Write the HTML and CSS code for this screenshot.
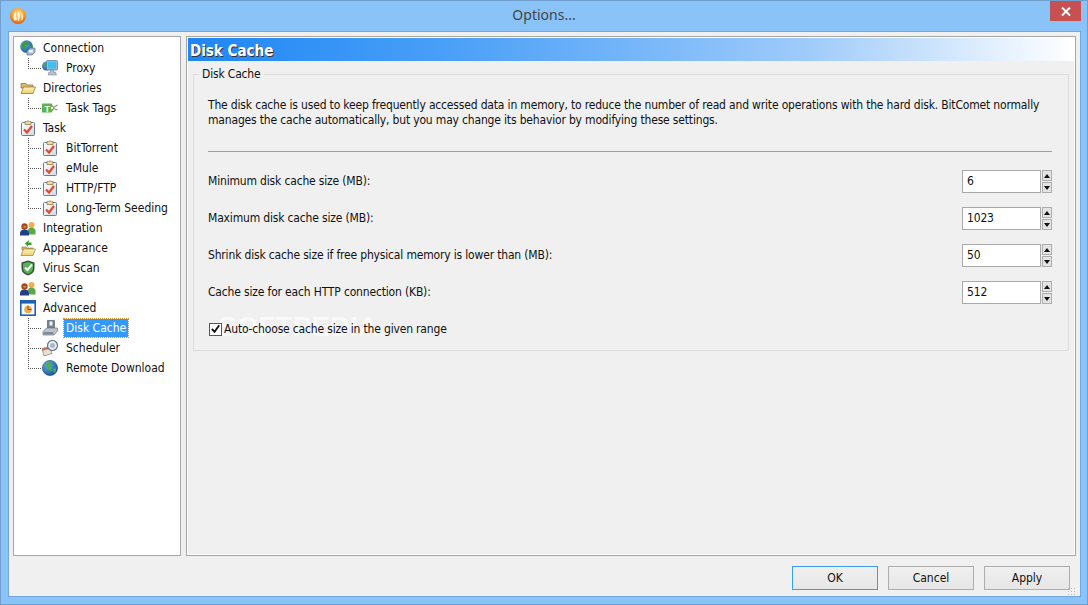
FILE: index.html
```html
<!DOCTYPE html>
<html lang="en">
<head>
<meta charset="utf-8">
<title>Options...</title>
<link rel="stylesheet" href="styles.css">
</head>
<body>
<svg class="defs" width="0" height="0" aria-hidden="true">
  <defs>
    <radialGradient id="gOrange" cx=".5" cy=".35" r=".7"><stop offset="0" stop-color="#ffe08a"/><stop offset=".6" stop-color="#f79a2a"/><stop offset="1" stop-color="#dd4a0c"/></radialGradient>
    <linearGradient id="gPaper" x1="0" y1="0" x2="1" y2="1"><stop offset="0" stop-color="#ffffff"/><stop offset="1" stop-color="#cfd8e6"/></linearGradient>
    <linearGradient id="gFolder" x1="0" y1="0" x2="0" y2="1"><stop offset="0" stop-color="#fff4bd"/><stop offset="1" stop-color="#eecb6c"/></linearGradient>
    <radialGradient id="gGlobe" cx=".35" cy=".3" r=".8"><stop offset="0" stop-color="#5fb2ee"/><stop offset="1" stop-color="#134f96"/></radialGradient>
    <symbol id="i-conn" viewBox="0 0 16 16">
      <circle cx="6.500" cy="6.500" r="6.300" fill="url(#gGlobe)"/>
      <path d="M2 4l3-3 4 .5-1 3-3 1 1 3-2 .5-2-2.500zM9 6l3-1 1 2-2 2-2-1z" fill="#3f9a3e"/>
      <path d="M7 11l3-3h5v4l-3 3H7z" fill="#a8b8cc" stroke="#55677f" stroke-width=".6"/>
      <rect x="9" y="10" width="4" height="2.500" fill="#e8f1fa"/>
    </symbol>
    <symbol id="i-proxy" viewBox="0 0 16 16">
      <circle cx="4.500" cy="6" r="4.500" fill="url(#gGlobe)"/>
      <path d="M1.500 4l3-2 2 2-2 3-2-1z" fill="#49a847"/>
      <rect x="4.500" y="0.500" width="11" height="9.500" rx="1" fill="#9dbcd9" stroke="#4f6e8e" stroke-width=".7"/>
      <rect x="6" y="2" width="8" height="6.500" fill="#3fc0f2"/>
      <path d="M8.500 10h3v2h2l1 3H6l1-3h1.500z" fill="#b9c3d0" stroke="#6b7a8c" stroke-width=".5"/>
    </symbol>
    <symbol id="i-folder" viewBox="0 0 16 16">
      <path d="M1 3.500h5l1 1.500h6v3H1z" fill="#d9bb67" stroke="#84703a" stroke-width=".7"/>
      <path d="M1 13.500l2.500-6.500h12l-2.500 6.500z" fill="url(#gFolder)" stroke="#84703a" stroke-width=".7"/>
    </symbol>
    <symbol id="i-tag" viewBox="0 0 16 16">
      <path d="M0 3.500h9.500l3 4.500-3 4.500H0z" fill="#5cb348"/>
      <text class="tagt" x="2.500" y="11.500">T</text>
      <circle cx="10" cy="8" r="1.200" fill="#fff"/>
      <path d="M11.500 7.500l4-2.500M11.500 8.500l4 1.500" stroke="#8b9388" stroke-width="1.200" fill="none"/>
    </symbol>
    <symbol id="i-task" viewBox="0 0 16 16">
      <rect x="1.500" y="2.500" width="13" height="13" rx="1" fill="url(#gPaper)" stroke="#6a7d98" stroke-width="1"/>
      <path d="M5 1.500h1.500q1.500-1.500 3 0H11v3H5z" fill="#eed9a0" stroke="#8b7437" stroke-width=".7"/>
      <path d="M4 9.500l3 3 5-6.500" stroke="#e2492c" stroke-width="2.200" fill="none"/>
    </symbol>
    <symbol id="i-people" viewBox="0 0 16 16">
      <circle cx="11.500" cy="5" r="3" fill="#eeb04e"/>
      <path d="M7.500 14.500v-4q1-3 4-3t4 3v4z" fill="#5aa846"/>
      <circle cx="4.500" cy="6.500" r="3.200" fill="#a34c1f"/>
      <path d="M3 6.500a2 1.800 0 0 0 3.500 0z" fill="#f0c38e"/>
      <path d="M0 15.500v-3q1-3 4.500-3t4.500 3v3z" fill="#223f86"/>
    </symbol>
    <symbol id="i-appear" viewBox="0 0 16 16">
      <path d="M2 7h4l1 1h6v2H2z" fill="#d9bb67" stroke="#84703a" stroke-width=".6"/>
      <path d="M1 15.500l2.500-6.500h12l-2.500 6.500z" fill="url(#gFolder)" stroke="#84703a" stroke-width=".6"/>
      <path d="M9 0L5 3.500 8 7V5h3.500V2.500H8.500z" fill="#3a9e2c"/>
    </symbol>
    <symbol id="i-shield" viewBox="0 0 16 16">
      <path d="M8 .5l6.500 2v5.500q0 5.500-6.500 7.500-6.500-2-6.500-7.500V2.500z" fill="#3d4a44"/>
      <path d="M8 2l5 1.500v4.500q0 4.500-5 6-5-1.500-5-6V3.500z" fill="#54b552"/>
      <path d="M5 7.500l2.500 2.500L12 4.500" stroke="#fff" stroke-width="2" fill="none"/>
    </symbol>
    <symbol id="i-adv" viewBox="0 0 16 16">
      <rect x=".8" y=".8" width="14.400" height="14.400" fill="#f8fbff" stroke="#1e62b4" stroke-width="1.600"/>
      <rect x=".8" y=".8" width="14.400" height="2.800" fill="#1e62b4"/>
      <circle cx="8" cy="9.500" r="3.800" fill="#e8b04a"/>
      <path d="M8 5.500v4h3.500" stroke="#7a4f12" stroke-width="1" fill="none"/>
    </symbol>
    <symbol id="i-disk" viewBox="0 0 16 16">
      <path d="M5.500 .5h7v8h-7z" fill="#78828f" stroke="#474f5c" stroke-width=".6"/>
      <rect x="7.500" y="1.500" width="3" height="4" fill="#eef1f5"/>
      <path d="M1 11.500l3.500-3.500h11v3l-3.500 4H1z" fill="#bcc3cd" stroke="#5d6470" stroke-width=".6"/>
      <path d="M1.500 12h10v2.500h-10z" fill="#838a95"/>
    </symbol>
    <symbol id="i-sched" viewBox="0 0 16 16">
      <path d="M0 8.500l8-2 2 7-8 2.500z" fill="#e8dfd5" stroke="#8a7a72" stroke-width=".7"/>
      <path d="M0 8.500l8-2 .6 2.200-8 2z" fill="#c9735a"/>
      <circle cx="10.500" cy="5.500" r="5" fill="#e9edf2" stroke="#66778a" stroke-width="1.200"/>
      <circle cx="10.500" cy="5.500" r="2.500" fill="#a9b7c6"/>
    </symbol>
    <symbol id="i-globe" viewBox="0 0 16 16">
      <circle cx="8" cy="8" r="7.600" fill="url(#gGlobe)" stroke="#144a80" stroke-width=".6"/>
      <path d="M3 4l4-2 3 1-2 3 2 2-1 3-3-2-1-3-2-1zM11 9l3-1 0 3-2 2z" fill="#4fae45"/>
    </symbol>
  </defs>
</svg>

<div class="window">
  <header class="titlebar">
    <svg class="app-icon" viewBox="0 0 16 16" width="16" height="16" aria-hidden="true">
      <circle cx="8" cy="8" r="8" fill="url(#gOrange)"/>
      <path d="M4 12.500Q2.500 7 6 2.500 5.500 8 7 12M8 13Q7 6 9 2.500q1.500 5 0 10.500M11 12.500q1.500-4-1-9 4 3.500 2.800 8" fill="#fff" opacity=".85"/>
    </svg>
    <span class="title">Options...</span>
    <button class="close" type="button" aria-label="Close">
      <svg viewBox="0 0 10 9" width="10" height="9" aria-hidden="true"><path d="M1 .5l8 8M9 .5l-8 8" stroke="#fff" stroke-width="2" fill="none"/></svg>
    </button>
  </header>

  <div class="client">
    <div class="main">
      <nav class="tree">
        <div class="node"><svg class="ic"><use href="#i-conn"/></svg><span class="lbl">Connection</span></div>
        <div class="node child"><i class="elbow last"></i><svg class="ic"><use href="#i-proxy"/></svg><span class="lbl">Proxy</span></div>
        <div class="node"><svg class="ic"><use href="#i-folder"/></svg><span class="lbl">Directories</span></div>
        <div class="node child"><i class="elbow last"></i><svg class="ic"><use href="#i-tag"/></svg><span class="lbl">Task Tags</span></div>
        <div class="node"><svg class="ic"><use href="#i-task"/></svg><span class="lbl">Task</span></div>
        <div class="node child"><i class="elbow"></i><svg class="ic"><use href="#i-task"/></svg><span class="lbl">BitTorrent</span></div>
        <div class="node child"><i class="elbow"></i><svg class="ic"><use href="#i-task"/></svg><span class="lbl">eMule</span></div>
        <div class="node child"><i class="elbow"></i><svg class="ic"><use href="#i-task"/></svg><span class="lbl">HTTP/FTP</span></div>
        <div class="node child"><i class="elbow last"></i><svg class="ic"><use href="#i-task"/></svg><span class="lbl">Long-Term Seeding</span></div>
        <div class="node"><svg class="ic"><use href="#i-people"/></svg><span class="lbl">Integration</span></div>
        <div class="node"><svg class="ic"><use href="#i-appear"/></svg><span class="lbl">Appearance</span></div>
        <div class="node"><svg class="ic"><use href="#i-shield"/></svg><span class="lbl">Virus Scan</span></div>
        <div class="node"><svg class="ic"><use href="#i-people"/></svg><span class="lbl">Service</span></div>
        <div class="node"><svg class="ic"><use href="#i-adv"/></svg><span class="lbl">Advanced</span></div>
        <div class="node child"><i class="elbow"></i><svg class="ic"><use href="#i-disk"/></svg><span class="lbl selected">Disk Cache</span></div>
        <div class="node child"><i class="elbow"></i><svg class="ic"><use href="#i-sched"/></svg><span class="lbl">Scheduler</span></div>
        <div class="node child"><i class="elbow last"></i><svg class="ic"><use href="#i-globe"/></svg><span class="lbl">Remote Download</span></div>
      </nav>

      <section class="panel">
        <h1 class="panel-head">Disk Cache</h1>
        <fieldset class="group">
          <legend class="legend">Disk Cache</legend>
          <p class="desc">The disk cache is used to keep frequently accessed data in memory, to reduce the number of read and write operations with the hard disk. BitComet normally manages the cache automatically, but you may change its behavior by modifying these settings.</p>
          <hr class="rule">
          <div class="field"><span class="cap">Minimum disk cache size (MB):</span><div class="spin"><span class="input">6</span><span class="arrows"><b class="up"></b><b class="down"></b></span></div></div>
          <div class="field"><span class="cap">Maximum disk cache size (MB):</span><div class="spin"><span class="input">1023</span><span class="arrows"><b class="up"></b><b class="down"></b></span></div></div>
          <div class="field"><span class="cap">Shrink disk cache size if free physical memory is lower than (MB):</span><div class="spin"><span class="input">50</span><span class="arrows"><b class="up"></b><b class="down"></b></span></div></div>
          <div class="field"><span class="cap">Cache size for each HTTP connection (KB):</span><div class="spin"><span class="input">512</span><span class="arrows"><b class="up"></b><b class="down"></b></span></div></div>
          <div class="check">
            <span class="box"><svg viewBox="0 0 12 12" width="12" height="12" aria-hidden="true"><path d="M2 6l3 3 5-7" stroke="#111" stroke-width="2" fill="none"/></svg></span>
            <span>Auto-choose cache size in the given range</span>
            <span class="mark">SOFTPEDIA</span>
          </div>
        </fieldset>
      </section>
    </div>

    <footer class="actions">
      <button class="btn default" type="button">OK</button>
      <button class="btn" type="button">Cancel</button>
      <button class="btn" type="button">Apply</button>
      <i class="grip"></i>
    </footer>
  </div>
</div>
</body>
</html>
```

FILE: styles.css
```css
* { box-sizing: border-box; }
html, body { margin: 0; height: 100%; }
body {
  overflow: hidden;
  font-family: "DejaVu Sans Condensed", "DejaVu Sans", sans-serif;
  font-stretch: condensed;
  font-size: 12px;
  color: #111;
}
.defs { display: block; height: 0; }
.tagt { font: bold 9px "Liberation Sans", sans-serif; fill: #fff; }

.window {
  width: 1088px;
  height: 605px;
  display: flex;
  flex-direction: column;
  background: #8ac3f8;
  border: 1px solid #6f9fcf;
}
.titlebar {
  height: 30px;
  flex: none;
  display: flex;
  align-items: flex-start;
  position: relative;
  padding-left: 9px;
}
.app-icon { margin-top: 7px; }
.title {
  position: absolute;
  left: 0;
  right: 0;
  top: 4px;
  text-align: center;
  font-family: "Noto Sans", sans-serif;
  font-stretch: normal;
  font-size: 14px;
  line-height: 20px;
  color: #444;
}
.close {
  margin-left: auto;
  margin-right: 6px;
  width: 31px;
  height: 20px;
  padding: 0;
  border: 0;
  background: #c75050;
  display: flex;
  align-items: center;
  justify-content: center;
  position: relative;
}

.client {
  flex: 1;
  margin: 0 6px 7px 7px;
  background: #f0f0f0;
  border: 1px solid #74a8dc;
  display: flex;
  flex-direction: column;
  padding: 4px 4px 0 4px;
  position: relative;
}
.main {
  height: 520px;
  display: flex;
  gap: 5px;
}

.tree {
  width: 168px;
  flex: none;
  background: #fff;
  border: 1px solid #a6a6a6;
  padding-top: 1px;
}
.node {
  height: 20px;
  display: flex;
  align-items: center;
  padding-left: 6px;
}
.node.child { padding-left: 14px; }
.ic { width: 16px; height: 16px; flex: none; }
.lbl {
  margin-left: 7px;
  line-height: 16px;
  white-space: nowrap;
}
.child .lbl { margin-left: 8px; }
.child .selected {
  background: #3399ff;
  color: #fff;
  outline: 1px dotted #e0902a;
  height: 18px;
  line-height: 18px;
  padding: 0 2px;
  margin-left: 6px;
}
.elbow {
  width: 14px;
  height: 20px;
  flex: none;
  background:
    repeating-linear-gradient(to bottom, #555 0 1px, transparent 1px 2px) left top / 1px 100% no-repeat,
    repeating-linear-gradient(to right, #555 0 1px, transparent 1px 2px) left 10px / 100% 1px no-repeat;
}
.elbow.last {
  background:
    repeating-linear-gradient(to bottom, #555 0 1px, transparent 1px 2px) left top / 1px 10px no-repeat,
    repeating-linear-gradient(to right, #555 0 1px, transparent 1px 2px) left 10px / 100% 1px no-repeat;
}

.panel {
  flex: 1;
  min-width: 0;
  background: #f0f0f0;
  border: 1px solid #a6a6a6;
  box-shadow: inset 0 0 0 1px #fff;
  padding: 1px;
  display: flex;
  flex-direction: column;
}
.panel-head {
  margin: 0;
  height: 23px;
  flex: none;
  padding-left: 2px;
  font-size: 15px;
  line-height: 26px;
  font-weight: 700;
  color: #fff;
  text-shadow: 1px 1px 0 #333;
  background: linear-gradient(to right, #1e86f5 0, #4ba0f7 30%, #9fcbfa 70%, #fff 100%);
}
.group {
  margin: 5px 5px 0 5px;
  height: 285px;
  flex: none;
  padding: 0 16px 0 14px;
  border: 1px solid #dcdcdc;
  min-width: 0;
  position: relative;
  isolation: isolate;
  letter-spacing: -0.17px;
}
.legend {
  padding: 0 3px;
  margin-left: -9px;
  line-height: 16px;
}
.desc {
  margin: 16px 0 0;
  line-height: 15px;
}
.rule {
  margin: 23px 0 0;
  border: 0;
  border-top: 1px solid #a0a0a0;
  height: 1px;
}
.field {
  height: 23px;
  margin-top: 14px;
  display: flex;
  align-items: center;
  justify-content: space-between;
}
.rule + .field { margin-top: 18px; }
.cap { margin-top: -2px; }
.spin { display: flex; gap: 1px; }
.input {
  width: 79px;
  height: 23px;
  background: #fff;
  border: 1px solid #a9a9a9;
  padding-left: 4px;
  line-height: 21px;
}
.arrows {
  width: 10px;
  display: flex;
  flex-direction: column;
  gap: 1px;
}
.arrows b {
  height: 11px;
  background: #e4e4e4;
  border: 1px solid #adadad;
  display: flex;
  align-items: center;
  justify-content: center;
}
.arrows b::after {
  content: "";
  width: 0;
  height: 0;
  border-left: 3px solid transparent;
  border-right: 3px solid transparent;
}
.up::after { border-bottom: 4px solid #111; }
.down::after { border-top: 4px solid #111; }

.check {
  margin-top: 17px;
  display: flex;
  align-items: center;
  height: 16px;
  gap: 2px;
  padding-left: 1px;
  position: relative;
}
.box {
  width: 13px;
  height: 13px;
  background: #fff;
  border: 1px solid #555;
  display: flex;
  align-items: center;
  justify-content: center;
}
.mark {
  position: absolute;
  z-index: -1;
  left: 10px;
  top: -11px;
  font-family: "Liberation Sans", sans-serif;
  font-stretch: normal;
  font-weight: 700;
  font-size: 28px;
  line-height: 34px;
  letter-spacing: 0;
  color: #fff;
  opacity: .6;
  pointer-events: none;
}

.actions {
  flex: 1;
  display: flex;
  justify-content: flex-end;
  gap: 10px;
  padding: 10px 6px 0 0;
  position: relative;
}
.btn {
  width: 86px;
  height: 24px;
  padding: 0;
  font: inherit;
  color: #111;
  background: linear-gradient(to bottom, #f0f0f0, #e6e6e6);
  border: 1px solid #adadad;
}
.btn.default { border-color: #3c9cf0; }
.grip {
  position: absolute;
  right: 0;
  bottom: 0;
  width: 9px;
  height: 9px;
  background: radial-gradient(circle, #bcbcbc 1px, transparent 1px) 0 0 / 3px 3px;
}
```
